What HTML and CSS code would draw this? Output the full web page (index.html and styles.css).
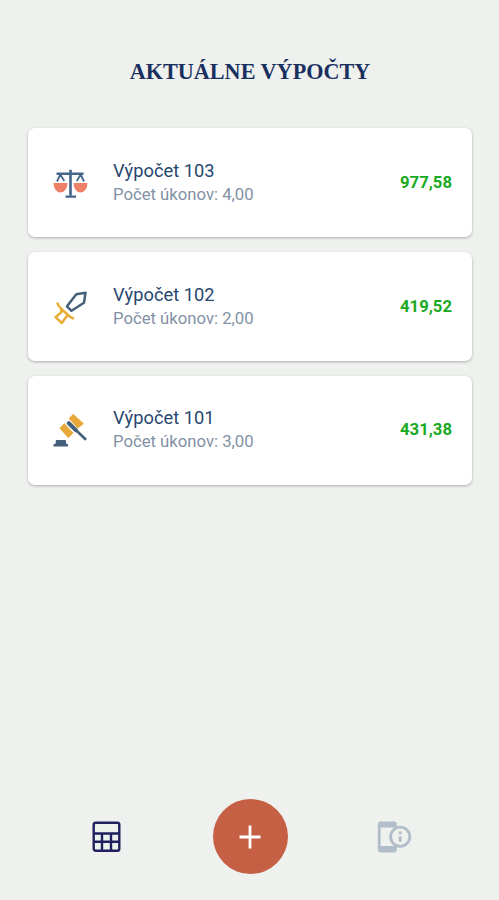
FILE: index.html
```
<!DOCTYPE html>
<html lang="sk">
<head>
    <meta charset="utf-8">
    <link rel="stylesheet" href="styles.css">
    <title>Aktuálne výpočty</title>
</head>
<body>
    <h1>AKTUÁLNE VÝPOČTY</h1>

    <!--LIST-->
    <div class="list">
        <div class="card">
            <svg class="card-icon" viewBox="0 0 36 36" fill="none" stroke="#46658a" stroke-width="1.8">
                <path d="M.5 18h14a7 9.5 0 0 1-14 0zM20.5 18h14a7 9.5 0 0 1-14 0z" fill="#ee8068" stroke="none"/>
                <path d="M3.5 8.7h27M12.5 31.6h10.5" stroke-width="2.4"/>
                <path d="M17.5 4.8v26" stroke-width="2.6"/>
                <path d="M7.3 9.5L4 16.5M7.3 9.5l4 6.5M27.7 9.5l-4 6.5M27.7 9.5l3.3 7"/>
            </svg>
            <div class="info">
                <div class="name">Výpočet 103</div>
                <div class="count">Počet úkonov: 4,00</div>
            </div>
            <div class="price">977,58</div>
        </div>

        <div class="card">
            <svg class="card-icon" viewBox="0 0 36 36" fill="none" stroke-width="2.5" stroke-linejoin="round">
                <path d="M32.5 3.8l-9.2 1.5L14 17.3l4.5 4.5L31 13.8z" stroke="#46607c"/>
                <path d="M4.3 13.5c.2 2.5 1.6 4 3.4 5.6l6.6 6.4c2 2 4 3.6 6.7 4.2M8.2 19.8v3.6l-5.7 4.8 6.3 5.8 5.4-7.5" stroke="#e9ad37"/>
            </svg>
            <div class="info">
                <div class="name">Výpočet 102</div>
                <div class="count">Počet úkonov: 2,00</div>
            </div>
            <div class="price">419,52</div>
        </div>

        <div class="card">
            <svg class="card-icon" viewBox="0 0 36 36">
                <path d="M20.3 2.4l10 9.2-5.4 4.4-8.8-9.6zM11.3 11.7l8.8 9.3-4.8 4.5L7 16.3z" fill="#e9a83a" stroke="#e9a83a" stroke-linejoin="round"/>
                <path d="M15.8 11.2L33 27.8" stroke="#46607c" stroke-width="2.6"/>
                <path d="M15.8 11.2l7.2 7" stroke="#46607c" stroke-width="4" stroke-linecap="round"/>
                <path d="M3 28h9.7l.7 4H15v2.6H.5V32h1.9z" fill="#46607c"/>
            </svg>
            <div class="info">
                <div class="name">Výpočet 101</div>
                <div class="count">Počet úkonov: 3,00</div>
            </div>
            <div class="price">431,38</div>
        </div>
    </div>

    <!--BOTTOM MENU-->
    <div class="menu">
        <button class="menu-button">
            <svg class="menu-icon" viewBox="0 0 36 36" fill="none" stroke="#20205f" stroke-width="2.4">
                <rect x="4.7" y="3.7" width="25.6" height="28" rx="2"/>
                <path d="M4.5 14.5h26M4.5 22.7h26M13 14.5v17M22 14.5v17"/>
            </svg>
        </button>
        <button class="add-button">
            <svg class="menu-icon" viewBox="0 0 36 36" fill="none" stroke="#fff" stroke-width="2.8">
                <path d="M18 6.5v23M7.5 18h21"/>
            </svg>
        </button>
        <button class="menu-button">
            <svg class="menu-icon" viewBox="0 0 36 36" fill="none" stroke="#b1bdc8" stroke-width="2.8">
                <path d="M3.2 8v20"/>
                <path d="M1.8 8.5v-3q0-3 3-3h13q3 0 3 3v3zM1.8 27v3.5q0 3 3 3h13q3 0 3-3V27z" fill="#b1bdc8" stroke="none"/>
                <circle cx="24.2" cy="17.8" r="9.6" fill="#eef1ee"/>
                <path d="M24.2 17.3v5.5M24.2 12.6v2.6"/>
            </svg>
        </button>
    </div>
</body>
</html>
```
FILE: styles.css
```
body{
    margin: 0;
    height: 900px;
    box-sizing: border-box;
    padding: 58px 27px 26px 28px;
    display: flex;
    flex-direction: column;
    background-color: #eef1ee;
    font-family: Roboto, sans-serif;
}
h1{
    margin: 0;
    line-height: 28px;
    text-align: center;
    font-family: "Liberation Serif", serif;
    font-size: 22.2px;
    font-weight: bold;
    color: #19305f;
}
.list{
    display: flex;
    flex-direction: column;
    gap: 14.7px;
    margin-top: 42.4px;
}
.card{
    display: flex;
    align-items: center;
    height: 109px;
    box-sizing: border-box;
    padding: 0 20px 0 25px;
    border-radius: 7px;
    background-color: white;
    box-shadow: 0 1px 3px rgba(0, 0, 0, 0.28);
}
.card-icon{
    width: 36px;
    height: 36px;
}
.info{
    flex: 1;
    margin-left: 24px;
}
.name{
    font-size: 18.3px;
    line-height: 24px;
    color: #28476f;
}
.count{
    font-size: 16.7px;
    line-height: 24px;
    color: #8391a5;
}
.price{
    padding-bottom: 1px;
    font-size: 16.7px;
    font-weight: bold;
    color: #19a923;
}
.menu{
    display: flex;
    justify-content: space-between;
    align-items: center;
    margin-top: auto;
    padding: 0 60px;
}
.menu-button{
    width: 37px;
    height: 36px;
    padding: 0;
    border: none;
    background: none;
    cursor: pointer;
}
.add-button{
    width: 75px;
    height: 75px;
    padding: 0;
    border: none;
    border-radius: 50%;
    background-color: #c66045;
    cursor: pointer;
}
.menu-icon{
    display: block;
    width: 36px;
    height: 36px;
    margin: auto;
}
```
